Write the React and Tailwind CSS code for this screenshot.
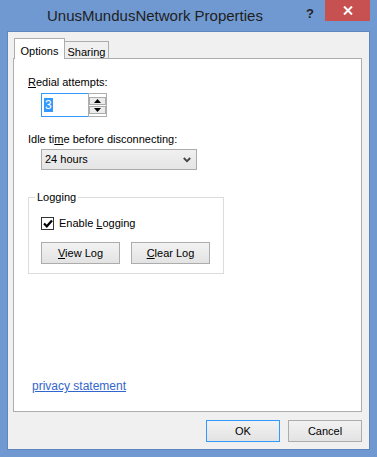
const font = { fontFamily: '"Liberation Sans", Arial, sans-serif' }

function WinButton({ children, focused, className = '' }) {
  return (
    <div
      className={`flex items-center justify-center h-[22px] text-[11px] text-black bg-gradient-to-b from-[#f2f2f2] to-[#e3e3e3] border ${
        focused ? 'border-[#3399ff]' : 'border-[#acacac]'
      } ${className}`}
    >
      {children}
    </div>
  )
}

function Spinner() {
  return (
    <div className="flex ml-[13px] mt-[4px] h-[24px]">
      <div className="w-[47px] h-full border border-r-0 border-[#3399ff] bg-white flex items-center pl-[2px]">
        <span className="bg-[#3399ff] text-white text-[12px] leading-[14px] px-px">3</span>
      </div>
      <div className="w-[19px] h-full border border-[#adadad] bg-white flex flex-col items-center justify-center gap-px pr-px">
        <div className="w-[17px] h-[8px] border border-[#acacac] bg-[#ececec] flex items-center justify-center">
          <svg width="7" height="4" viewBox="0 0 7 4"><path d="M3.5 0L7 4H0z" fill="#000" /></svg>
        </div>
        <div className="w-[17px] h-[8px] border border-[#acacac] bg-[#ececec] flex items-center justify-center">
          <svg width="7" height="4" viewBox="0 0 7 4"><path d="M0 0h7L3.5 4z" fill="#000" /></svg>
        </div>
      </div>
    </div>
  )
}

export default function App() {
  return (
    <div className="w-[377px] h-[457px] bg-[#7099d1] flex flex-col overflow-hidden" style={font}>
      <div className="relative h-[31px] shrink-0">
        <div className="absolute left-[47px] top-[7px] text-[15px] leading-[17px] text-[#1e1e1e]">
          UnusMundusNetwork Properties
        </div>
        <div className="absolute left-[306px] top-[4px] text-[13px] font-bold text-[#222]">?</div>
        <div className="absolute right-[7px] top-0 w-[45px] h-[21px] bg-[#c75050] flex items-center justify-center">
          <svg width="10" height="9" viewBox="0 0 10 9">
            <path d="M1 0.5L9 8.5M9 0.5L1 8.5" stroke="#fff" strokeWidth="2" />
          </svg>
        </div>
      </div>

      <div className="flex-1 mx-[7px] mb-[7px] border border-[#5f86bf] bg-[#f0f0f0] flex flex-col pt-[6px] pl-[5px] pr-[7px] pb-[7px]">
        <div className="flex items-end pl-px relative z-10 -mb-px">
          <div className="h-[21px] w-[51px] bg-white border border-b-0 border-[#adadad] text-[11px] text-black flex items-start justify-center pt-[4px]">
            Options
          </div>
          <div className="h-[18px] w-[44px] bg-[#f0f0f0] border border-l-0 border-[#adadad] text-[11px] text-black flex items-start justify-center pt-[2px]">
            Sharing
          </div>
        </div>

        <div className="flex-1 bg-white border border-[#adadad] flex flex-col pl-[14px] pt-[17px] pb-[18px] text-[11px] text-black">
          <div className="leading-[13px]">
            <u>R</u>edial attempts:
          </div>
          <Spinner />

          <div className="leading-[13px] mt-[16px]">
            Idle ti<u>m</u>e before disconnecting:
          </div>
          <div className="ml-[13px] mt-[3px] w-[156px] h-[21px] border border-[#acacac] bg-gradient-to-b from-[#f0f0f0] to-[#e5e5e5] flex items-center justify-between pl-[3px] pr-[5px]">
            <span>24 hours</span>
            <svg width="8" height="6" viewBox="0 0 8 6">
              <path d="M0.8 1L4 4.2L7.2 1" stroke="#444" strokeWidth="1.8" fill="none" />
            </svg>
          </div>

          <div className="relative w-[196px] h-[77px] mt-[27px] border border-[#dcdcdc] pl-[12px] pt-[19px]">
            <div className="absolute left-[6px] -top-[7px] bg-white px-[2px] leading-[13px]">Logging</div>
            <div className="flex items-center gap-[5px]">
              <div className="w-[13px] h-[13px] border border-[#333] bg-white flex items-center justify-center">
                <svg width="10" height="9" viewBox="0 0 10 9">
                  <path d="M1 4.5L3.8 7.3L9 1.5" stroke="#000" strokeWidth="2.2" fill="none" />
                </svg>
              </div>
              <span className="leading-[13px]">
                Enable <u>L</u>ogging
              </span>
            </div>
            <div className="flex gap-[11px] mt-[12px]">
              <WinButton className="w-[79px]">
                <span>
                  <u>V</u>iew Log
                </span>
              </WinButton>
              <WinButton className="w-[79px]">
                <span>
                  <u>C</u>lear Log
                </span>
              </WinButton>
            </div>
          </div>

          <a className="mt-auto ml-[4px] text-[12px] text-[#3366cc] underline leading-[14px] w-fit" href="#">
            privacy statement
          </a>
        </div>

        <div className="flex justify-end gap-[8px] mt-[8px]">
          <WinButton focused className="w-[74px]">OK</WinButton>
          <WinButton className="w-[74px]">Cancel</WinButton>
        </div>
      </div>
    </div>
  )
}
